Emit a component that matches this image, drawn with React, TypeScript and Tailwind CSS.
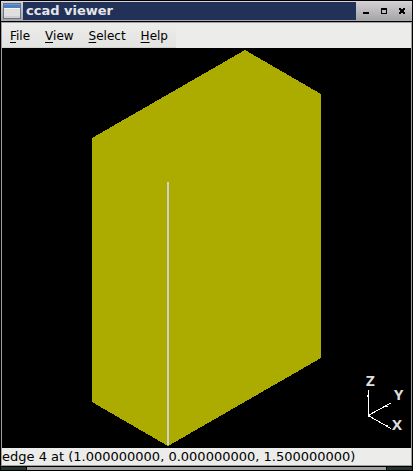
import React from "react";

const menus = ["File", "View", "Select", "Help"];

function TitleBar() {
  return (
    <header className="flex h-5 border-y border-t-[#d8d4da] border-b-[#a8a8ac] bg-linear-to-b from-[#d2ced3] to-[#a6a6a8]">
      <div className="flex w-[22px] items-center justify-center">
        <svg width="18" height="16" viewBox="0 0 18 16" shapeRendering="crispEdges" aria-hidden="true">
          <rect x="0" y="0" width="18" height="16" fill="#66758c" />
          <rect x="1" y="1" width="16" height="14" fill="#dfdfe0" />
          <rect x="1" y="1" width="16" height="4" fill="#4a80c2" />
          <rect x="1" y="1" width="16" height="1" fill="#6a9bd4" />
          <rect x="1" y="5" width="16" height="1" fill="#f5f5f5" />
          <rect x="1" y="13" width="16" height="2" fill="#cfcfcf" />
        </svg>
      </div>
      <h1 className="flex flex-1 items-center bg-[#223158] pl-[3px] text-[13px] leading-[18px] font-bold text-[#e6e6e8]">
        ccad viewer
      </h1>
      <div className="flex w-[56px] items-center gap-[2px] pl-[2px]">
        <button type="button" aria-label="Minimize" className="flex h-4 w-4 items-center justify-center">
          <svg width="6" height="6" viewBox="0 0 6 6" shapeRendering="crispEdges">
            <rect y="4" width="6" height="2" />
          </svg>
        </button>
        <button type="button" aria-label="Maximize" className="flex h-4 w-4 items-center justify-center">
          <svg width="6" height="6" viewBox="0 0 6 6" shapeRendering="crispEdges">
            <path d="M0 0h6v6H0z M1 2v3h4V2z" fillRule="evenodd" />
          </svg>
        </button>
        <button type="button" aria-label="Close" className="flex h-4 w-4 items-center justify-center">
          <svg width="6" height="6" viewBox="0 0 6 6" shapeRendering="crispEdges">
            <path d="M0 0h2v1h2V0h2v2H5v2h1v2H4V5H2v1H0V4h1V2H0z" />
          </svg>
        </button>
      </div>
    </header>
  );
}

function MenuBar() {
  return (
    <nav className="flex h-[25px] bg-[#ececea]">
      <div className="flex items-center gap-[15px] border-b border-[#d2d6cf] bg-linear-to-b from-[#ececea] to-[#e3e3e1] px-2 pt-[2px]">
        {menus.map((name) => (
          <button key={name} type="button" className="text-[12px] leading-4 text-black">
            <span className="underline underline-offset-2">{name[0]}</span>
            {name.slice(1)}
          </button>
        ))}
      </div>
    </nav>
  );
}

function Viewport() {
  return (
    <main className="flex-1 bg-black">
      <svg className="block w-full" viewBox="0 0 409 400" role="img" aria-label="Solid with edge 4 selected">
        <polygon points="243,2 319,46 319,310 166,398 90,354 90,90" fill="#acac00" shapeRendering="crispEdges" />
        <rect x="165" y="134" width="2" height="263" fill="#d0d0d0" shapeRendering="crispEdges" />
        <g stroke="#fff" fill="none" shapeRendering="crispEdges">
          <path d="M366.5 342v26 M366 367.500L389 355 M366 367.500L389 380.500" />
          <path d="M365.500 347v2 M383 358.500h3 M383 377.500h3" />
          <rect x="365.500" y="366.500" width="2" height="2" fill="#fff" stroke="none" />
        </g>
        <g className="text-[15px] font-bold" fill="#e0e0e0" fontFamily="'Open Sans', 'Noto Sans', sans-serif">
          <text x="364" y="338">Z</text>
          <text x="392" y="352">Y</text>
          <text x="390" y="382">X</text>
        </g>
      </svg>
    </main>
  );
}

export default function App() {
  return (
    <div
      className="flex min-h-screen flex-col border border-black bg-black"
      style={{ fontFamily: "'DejaVu Sans', sans-serif" }}
    >
      <TitleBar />
      <div className="mt-px flex flex-1 flex-col border border-[#a0a0a3]">
        <MenuBar />
        <Viewport />
        <footer className="h-[17px] bg-[#ececea] text-[13px] leading-[17px] whitespace-nowrap text-black">
          edge 4 at (1.000000000, 0.000000000, 1.500000000)
        </footer>
      </div>
      <div className="mt-px flex h-[3px] gap-px">
        <div className="w-[25px] bg-[#223329]" />
        <div className="flex-1 bg-[#a0a0a3]" />
        <div className="w-[25px] bg-[#223329]" />
      </div>
    </div>
  );
}
